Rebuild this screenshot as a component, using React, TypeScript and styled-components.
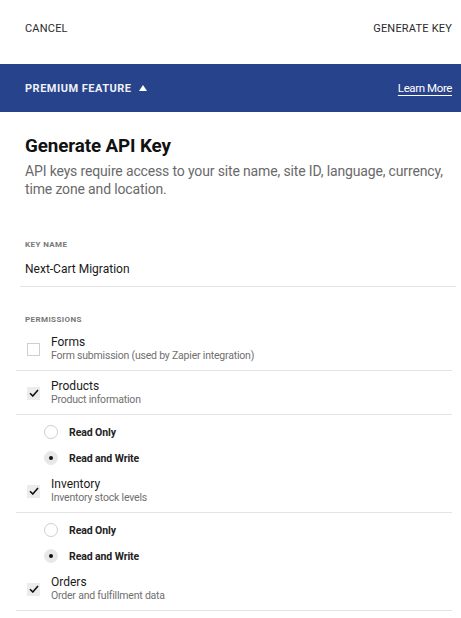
import styled, { createGlobalStyle } from "styled-components";

const GlobalStyle = createGlobalStyle`
  html, body {
    margin: 0;
    padding: 0;
    background: #ffffff;
  }
  body {
    font-family: Roboto, "Liberation Sans", Arial, sans-serif;
    color: #1a1a1a;
  }
`;

type Permission = {
  name: string;
  description: string;
  checked: boolean;
  access?: "read" | "write";
};

const permissions: Permission[] = [
  {
    name: "Forms",
    description: "Form submission (used by Zapier integration)",
    checked: false,
  },
  {
    name: "Products",
    description: "Product information",
    checked: true,
    access: "write",
  },
  {
    name: "Inventory",
    description: "Inventory stock levels",
    checked: true,
    access: "write",
  },
  {
    name: "Orders",
    description: "Order and fulfillment data",
    checked: true,
  },
];

const Page = styled.div`
  width: 461px;
  min-height: 618px;
  background: #fff;
`;

const TopBar = styled.div`
  height: 64px;
  padding: 0 9px 0 25px;
  display: flex;
  align-items: center;
  justify-content: space-between;
`;

const TopAction = styled.button`
  border: none;
  background: none;
  padding: 0;
  font-family: inherit;
  font-size: 11px;
  letter-spacing: 0.2px;
  color: #2b2b2b;
  text-transform: uppercase;
  margin-top: -8px;
`;

const Banner = styled.div`
  height: 48px;
  background: #27438b;
  padding: 0 9px 0 25px;
  display: flex;
  align-items: center;
  justify-content: space-between;
  color: #fff;
`;

const BannerTitle = styled.div`
  display: flex;
  align-items: center;
  gap: 7px;
  font-size: 11px;
  font-weight: 700;
  letter-spacing: 0.5px;
  color: #eef1f8;
`;

const LearnMore = styled.a`
  font-size: 11.5px;
  color: #fff;
  text-decoration: underline;
  text-underline-offset: 3px;
  letter-spacing: -0.4px;
`;

const Body = styled.div`
  padding: 22px 9px 0 25px;
`;

const Title = styled.h1`
  margin: 0;
  font-size: 18.8px;
  font-weight: 700;
  line-height: 24px;
  color: #111;
  letter-spacing: -0.1px;
`;

const Description = styled.p`
  margin: 4px 0 0;
  font-size: 14px;
  line-height: 18px;
  color: #6a6a6a;
  letter-spacing: -0.15px;
`;

const FieldLabel = styled.div<{ $top: number }>`
  margin-top: ${(p) => p.$top}px;
  font-size: 8px;
  font-weight: 700;
  letter-spacing: 0.4px;
  color: #777;
  text-transform: uppercase;
`;

const KeyValue = styled.div`
  margin: 12px -4px 0 -5px;
  padding: 0 0 9px 5px;
  font-size: 12px;
  line-height: 16px;
  color: #1a1a1a;
  border-bottom: 1px solid #e4e4e4;
`;

const List = styled.div`
  margin: 3px 0 0 -9px;
`;

const CheckRow = styled.div`
  display: flex;
  align-items: center;
  gap: 11px;
  padding: 8px 0 7px 11px;
  border-bottom: 1px solid #e4e4e4;
`;

const Box = styled.span<{ $checked: boolean }>`
  width: 13px;
  height: 13px;
  flex: none;
  box-sizing: border-box;
  border: 1px solid ${(p) => (p.$checked ? "#ececec" : "#cfcfcf")};
  background: ${(p) => (p.$checked ? "#ececec" : "#fff")};
  display: flex;
  align-items: center;
  justify-content: center;
`;

const Texts = styled.div`
  display: flex;
  flex-direction: column;
`;

const RowTitle = styled.span`
  font-size: 12px;
  line-height: 14px;
  color: #1a1a1a;
`;

const RowSub = styled.span`
  font-size: 10.5px;
  line-height: 14px;
  color: #6f6f6f;
  letter-spacing: -0.2px;
`;

const RadioGroup = styled.div`
  padding: 6px 0 0 28px;
  display: flex;
  flex-direction: column;
  gap: 4px;
`;

const RadioRow = styled.label`
  height: 22px;
  display: flex;
  align-items: center;
  gap: 11px;
`;

const Circle = styled.span<{ $on: boolean }>`
  width: 14px;
  height: 14px;
  flex: none;
  box-sizing: border-box;
  border-radius: 50%;
  border: 1px solid ${(p) => (p.$on ? "#e8e8e8" : "#cfcfcf")};
  background: ${(p) => (p.$on ? "#e8e8e8" : "#fff")};
  display: flex;
  align-items: center;
  justify-content: center;

  &::after {
    content: "";
    display: ${(p) => (p.$on ? "block" : "none")};
    width: 4px;
    height: 4px;
    border-radius: 50%;
    background: #111;
  }
`;

const RadioText = styled.span`
  font-size: 10.5px;
  font-weight: 700;
  color: #222;
  letter-spacing: -0.1px;
`;

const Check = () => (
  <svg width="10" height="8" viewBox="0 0 10 8">
    <path d="M1 4.2 L3.8 7 L9 1" fill="none" stroke="#111" strokeWidth="1.6" />
  </svg>
);

const Caret = () => (
  <svg width="8" height="6" viewBox="0 0 8 6">
    <path d="M4 0 L8 6 L0 6 Z" fill="#fff" />
  </svg>
);

export default function App() {
  return (
    <Page>
      <GlobalStyle />
      <TopBar>
        <TopAction>Cancel</TopAction>
        <TopAction>Generate Key</TopAction>
      </TopBar>
      <Banner>
        <BannerTitle>
          PREMIUM FEATURE <Caret />
        </BannerTitle>
        <LearnMore>Learn More</LearnMore>
      </Banner>
      <Body>
        <Title>Generate API Key</Title>
        <Description>
          API keys require access to your site name, site ID, language, currency,
          time zone and location.
        </Description>
        <FieldLabel $top={42}>Key Name</FieldLabel>
        <KeyValue>Next-Cart Migration</KeyValue>
        <FieldLabel $top={28}>Permissions</FieldLabel>
        <List>
          {permissions.map((perm) => (
            <div key={perm.name}>
              <CheckRow>
                <Box $checked={perm.checked}>{perm.checked && <Check />}</Box>
                <Texts>
                  <RowTitle>{perm.name}</RowTitle>
                  <RowSub>{perm.description}</RowSub>
                </Texts>
              </CheckRow>
              {perm.access && (
                <RadioGroup>
                  <RadioRow>
                    <Circle $on={perm.access === "read"} />
                    <RadioText>Read Only</RadioText>
                  </RadioRow>
                  <RadioRow>
                    <Circle $on={perm.access === "write"} />
                    <RadioText>Read and Write</RadioText>
                  </RadioRow>
                </RadioGroup>
              )}
            </div>
          ))}
        </List>
      </Body>
    </Page>
  );
}
